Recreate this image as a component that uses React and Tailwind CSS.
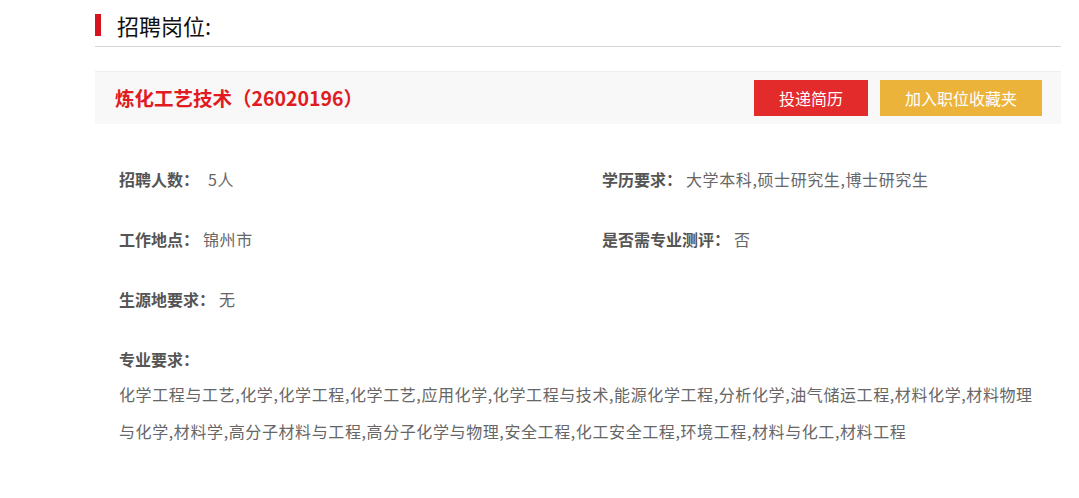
import React from "react";

const font = { fontFamily: '"Noto Sans CJK SC", "Noto Sans", sans-serif' };

const Field = ({ label, value, gap = "ml-[4px]" }) => (
  <div className="h-[60px] flex items-center text-base">
    <span className="font-bold text-[#555]">{label}</span>
    <span className={`text-[#666] tracking-[0.6px] ${gap}`}>{value}</span>
  </div>
);

const App = () => {
  const majors =
    "化学工程与工艺,化学,化学工程,化学工艺,应用化学,化学工程与技术,能源化学工程,分析化学,油气储运工程,材料化学,材料物理与化学,材料学,高分子材料与工程,高分子化学与物理,安全工程,化工安全工程,环境工程,材料与化工,材料工程";

  return (
    <div className="min-h-screen bg-white" style={font}>
      <div className="ml-[95px] w-[966px]">
        {/* Section title */}
        <div className="flex items-center h-[47px] pt-[4px] border-b border-[#d4d4d4]">
          <span className="w-[6px] h-[22px] bg-[#d7131d] mr-[16px]" />
          <h3 className="text-[22px] text-[#111] leading-none">招聘岗位:</h3>
        </div>

        {/* Job header */}
        <div className="mt-[24px] h-[53px] bg-[#f8f8f8] border-t border-[#eeeeee] flex items-center justify-between pl-[20px] pr-[19px]">
          <h4 className="text-[19.5px] font-bold text-[#e11b22]">炼化工艺技术（26020196）</h4>
          <div className="flex gap-3">
            <button className="w-[114px] h-[36px] bg-[#e42b2c] text-white text-base">投递简历</button>
            <button className="w-[162px] h-[36px] bg-[#ecb33a] text-white text-base">加入职位收藏夹</button>
          </div>
        </div>

        {/* Details */}
        <div className="pl-[24px] pt-[25px]">
          <div className="grid grid-cols-[483px_1fr]">
            <Field label="招聘人数：" value="5人" gap="ml-[9px]" />
            <Field label="学历要求：" value="大学本科,硕士研究生,博士研究生" />
            <Field label="工作地点：" value="锦州市" />
            <Field label="是否需专业测评：" value="否" />
            <Field label="生源地要求：" value="无" />
          </div>
          <div className="pt-[15px]">
            <p className="text-base font-bold text-[#555] leading-[30px]">专业要求：</p>
            <p className="text-base text-[#666] leading-[37px] tracking-[0.6px] w-[925px] mt-[2px]">{majors}</p>
          </div>
        </div>
      </div>
    </div>
  );
};

export default App;
